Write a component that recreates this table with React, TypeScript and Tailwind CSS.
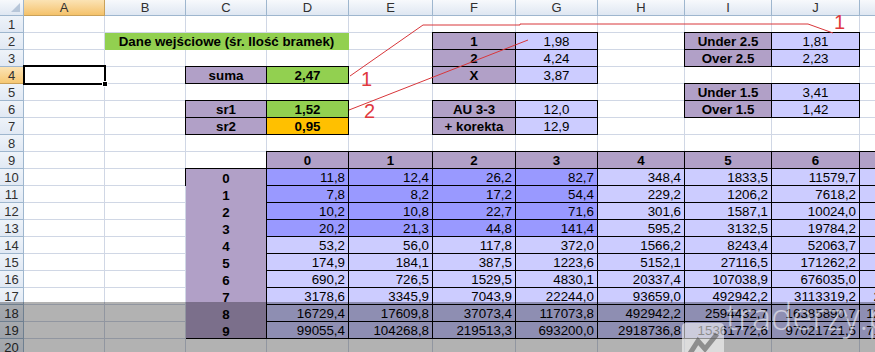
import React from "react";

const FONT: React.CSSProperties = { fontFamily: '"Liberation Sans", Arial, sans-serif' };

const GRIDL = "border-r border-b border-[#d0d7e5]";
const BOX = "border-r border-b border-black shadow-[0_-1px_0_0_#000,-1px_0_0_0_#000,-1px_-1px_0_0_#000]";
const PURPLE = "bg-[#b1a0c7]";
const LAV = "bg-[#ccccff]";
const BLUE = "bg-[#9999ff]";
const GREEN = "bg-[#92d050]";
const ORANGE = "bg-[#ffc000]";

type Align = "l" | "c" | "r";

function Cell({ t, cls = "", a = "c", bold = false }: { t?: string; cls?: string; a?: Align; bold?: boolean }) {
  const al = a === "r" ? "justify-end pr-[3px]" : a === "c" ? "justify-center" : "justify-start pl-[3px]";
  return (
    <div
      className={`flex items-end overflow-hidden whitespace-nowrap text-[13.33px] leading-[15px] text-black ${al} ${bold ? "font-bold" : ""} ${cls}`}
    >
      {t}
    </div>
  );
}

const E = () => <div className={GRIDL} />;

function RH({ n, sel = false }: { n: number; sel?: boolean }) {
  return (
    <div
      className={`flex items-center justify-center border-r border-b text-[13px] leading-none text-[#303030] ${
        sel
          ? "border-[#c9a15a] bg-linear-to-b from-[#fbe3b4] to-[#f6c873]"
          : "border-[#9eb6ce] bg-linear-to-b from-[#eef3f9] to-[#e1e9f4]"
      }`}
    >
      {n}
    </div>
  );
}

function CH({ l, sel = false }: { l: string; sel?: boolean }) {
  return (
    <div
      className={`flex items-center justify-center border-r border-b text-[13px] leading-none text-[#303030] ${
        sel
          ? "border-[#c9a15a] bg-linear-to-b from-[#fbe3b4] to-[#f4c26a]"
          : "border-[#9eb6ce] bg-linear-to-b from-[#f7f9fc] to-[#dfe7f2]"
      }`}
    >
      {l}
    </div>
  );
}

const DATA: string[][] = [
  ["11,8", "12,4", "26,2", "82,7", "348,4", "1833,5", "11579,7", "85319,2"],
  ["7,8", "8,2", "17,2", "54,4", "229,2", "1206,2", "7618,2", "56131,9"],
  ["10,2", "10,8", "22,7", "71,6", "301,6", "1587,1", "10024,0", "73856,8"],
  ["20,2", "21,3", "44,8", "141,4", "595,2", "3132,5", "19784,2", "145770,0"],
  ["53,2", "56,0", "117,8", "372,0", "1566,2", "8243,4", "52063,7", "383605,4"],
  ["174,9", "184,1", "387,5", "1223,6", "5152,1", "27116,5", "171262,2", "1261859,9"],
  ["690,2", "726,5", "1529,5", "4830,1", "20337,4", "107038,9", "676035,0", "4981025,9"],
  ["3178,6", "3345,9", "7043,9", "22244,0", "93659,0", "492942,2", "3113319,2", "22938935,9"],
  ["16729,4", "17609,8", "37073,4", "117073,8", "492942,2", "2594432,7", "16385890,7", "120731242,7"],
  ["99055,4", "104268,8", "219513,3", "693200,0", "2918736,8", "15361772,6", "97021721,5", "714856043,9"],
];

export default function App() {
  const rows: React.ReactNode[] = [];

  rows.push(
    <div key="corner" className="relative border-r border-b border-[#9eb6ce] bg-linear-to-b from-[#f7f9fc] to-[#dfe7f2]">
      <div className="absolute right-[3px] bottom-[3px] h-0 w-0 border-l-[9px] border-l-transparent [border-bottom:9px_solid_#b7c6d9]" />
    </div>
  );
  ["A", "B", "C", "D", "E", "F", "G", "H", "I", "J", "K"].forEach((l, i) =>
    rows.push(<CH key={"h" + l} l={l} sel={i === 0} />)
  );

  const emptyN = (k: string, n: number) => {
    for (let i = 0; i < n; i++) rows.push(<E key={k + "_" + i} />);
  };

  rows.push(<RH key="r1" n={1} />);
  emptyN("r1", 11);

  rows.push(<RH key="r2" n={2} />);
  rows.push(<E key="r2a" />);
  rows.push(
    <Cell key="r2b" t="Dane wejściowe (śr. Ilość bramek)" bold cls={`col-span-3 border-r border-b border-transparent ${GREEN}`} />
  );
  rows.push(<E key="r2e" />);
  rows.push(<Cell key="r2f" t="1" bold cls={`${BOX} ${PURPLE}`} />);
  rows.push(<Cell key="r2g" t="1,98" cls={`${BOX} ${LAV}`} />);
  rows.push(<E key="r2h" />);
  rows.push(<Cell key="r2i" t="Under 2.5" bold cls={`${BOX} ${PURPLE}`} />);
  rows.push(<Cell key="r2j" t="1,81" cls={`${BOX} ${LAV}`} />);
  rows.push(<E key="r2k" />);

  rows.push(<RH key="r3" n={3} />);
  emptyN("r3", 5);
  rows.push(<Cell key="r3f" t="2" bold cls={`${BOX} ${PURPLE}`} />);
  rows.push(<Cell key="r3g" t="4,24" cls={`${BOX} ${LAV}`} />);
  rows.push(<E key="r3h" />);
  rows.push(<Cell key="r3i" t="Over 2.5" bold cls={`${BOX} ${PURPLE}`} />);
  rows.push(<Cell key="r3j" t="2,23" cls={`${BOX} ${LAV}`} />);
  rows.push(<E key="r3k" />);

  rows.push(<RH key="r4" n={4} sel />);
  rows.push(
    <div key="r4a" className={`relative z-10 ${GRIDL}`}>
      <div className="absolute -left-px -top-[2px] -right-[2px] -bottom-[2px] border-[2px] border-black" />
      <div className="absolute -right-[4px] -bottom-[4px] h-[6px] w-[6px] border border-white bg-black" />
    </div>
  );
  rows.push(<E key="r4b" />);
  rows.push(<Cell key="r4c" t="suma" bold cls={`${BOX} ${PURPLE}`} />);
  rows.push(<Cell key="r4d" t="2,47" bold cls={`${BOX} ${GREEN}`} />);
  rows.push(<E key="r4e" />);
  rows.push(<Cell key="r4f" t="X" bold cls={`${BOX} ${PURPLE}`} />);
  rows.push(<Cell key="r4g" t="3,87" cls={`${BOX} ${LAV}`} />);
  emptyN("r4x", 4);

  rows.push(<RH key="r5" n={5} />);
  emptyN("r5", 8);
  rows.push(<Cell key="r5i" t="Under 1.5" bold cls={`${BOX} ${PURPLE}`} />);
  rows.push(<Cell key="r5j" t="3,41" cls={`${BOX} ${LAV}`} />);
  rows.push(<E key="r5k" />);

  rows.push(<RH key="r6" n={6} />);
  emptyN("r6", 2);
  rows.push(<Cell key="r6c" t="sr1" bold cls={`${BOX} ${PURPLE}`} />);
  rows.push(<Cell key="r6d" t="1,52" bold cls={`${BOX} ${GREEN}`} />);
  rows.push(<E key="r6e" />);
  rows.push(<Cell key="r6f" t="AU 3-3" bold cls={`${BOX} ${PURPLE}`} />);
  rows.push(<Cell key="r6g" t="12,0" cls={`${BOX} ${LAV}`} />);
  rows.push(<E key="r6h" />);
  rows.push(<Cell key="r6i" t="Over 1.5" bold cls={`${BOX} ${PURPLE}`} />);
  rows.push(<Cell key="r6j" t="1,42" cls={`${BOX} ${LAV}`} />);
  rows.push(<E key="r6k" />);

  rows.push(<RH key="r7" n={7} />);
  emptyN("r7", 2);
  rows.push(<Cell key="r7c" t="sr2" bold cls={`${BOX} ${PURPLE}`} />);
  rows.push(<Cell key="r7d" t="0,95" bold cls={`${BOX} ${ORANGE}`} />);
  rows.push(<E key="r7e" />);
  rows.push(<Cell key="r7f" t="+ korekta" bold cls={`${BOX} ${PURPLE}`} />);
  rows.push(<Cell key="r7g" t="12,9" cls={`${BOX} ${LAV}`} />);
  emptyN("r7x", 4);

  rows.push(<RH key="r8" n={8} />);
  emptyN("r8", 11);

  rows.push(<RH key="r9" n={9} />);
  emptyN("r9", 3);
  ["0", "1", "2", "3", "4", "5", "6", "7"].forEach((h, i) =>
    rows.push(
      <Cell
        key={"r9" + h}
        t={h}
        bold
        cls={`border-r border-b border-r-transparent border-b-black ${PURPLE} ${
          i === 0
            ? "shadow-[0_-1px_0_0_#000,-1px_0_0_0_#000,-1px_-1px_0_0_#000]"
            : "shadow-[0_-1px_0_0_#000,-1px_-1px_0_0_#000]"
        }`}
      />
    )
  );

  DATA.forEach((r, ri) => {
    rows.push(<RH key={"rr" + ri} n={10 + ri} />);
    rows.push(<E key={"rr" + ri + "a"} />);
    rows.push(<E key={"rr" + ri + "b"} />);
    if (ri === 0) {
      rows.push(
        <div key="merged" className={`row-span-10 flex flex-col ${BOX} ${PURPLE}`}>
          {["0", "1", "2", "3", "4", "5", "6", "7", "8", "9"].map((n) => (
            <div
              key={n}
              className="flex h-[17px] shrink-0 items-end justify-center text-[13.33px] leading-[15px] font-bold text-black"
            >
              {n}
            </div>
          ))}
        </div>
      );
    }
    r.forEach((v, ci) =>
      rows.push(<Cell key={"d" + ri + "_" + ci} t={v} a="r" cls={`${BOX} ${ri < 4 && ci < 4 ? BLUE : LAV}`} />)
    );
  });

  rows.push(<RH key="r20" n={20} />);
  emptyN("r20", 11);

  return (
    <div className="relative h-[352px] w-[875px] overflow-hidden bg-white" style={FONT}>
      <div className="grid w-[948px] grid-cols-[24px_81px_81px_81px_82px_84px_83px_82px_87px_87px_88px_88px] grid-rows-[16px_repeat(20,17px)]">
        {rows}
      </div>

      <svg className="pointer-events-none absolute left-0 top-0 z-20" width="875" height="352">
        <polyline
          points="350,76 423,25 520,25 520,24 808,24 833,33"
          fill="none"
          stroke="#d8363a"
          strokeWidth="1"
        />
        <line x1="349" y1="110" x2="528" y2="40" stroke="#d8363a" strokeWidth="1" />
        <text x="361" y="86" fill="#e0393e" fontSize="20" fontFamily="Liberation Sans, Arial, sans-serif">1</text>
        <text x="364" y="118" fill="#e0393e" fontSize="20" fontFamily="Liberation Sans, Arial, sans-serif">2</text>
        <text x="834" y="29" fill="#e0393e" fontSize="20" fontFamily="Liberation Sans, Arial, sans-serif">1</text>
      </svg>

      <div className="absolute inset-x-0 top-[302px] z-30 h-[50px] bg-black/30">
        <div className="absolute left-[682px] top-[21px] flex h-[42px] w-[42px] items-center justify-center rounded-[4px] bg-white/55">
          <svg width="34" height="30" viewBox="0 0 34 30">
            <polyline points="3,26 12,12 19,20 31,5" fill="none" stroke="rgba(90,90,90,0.6)" strokeWidth="5" />
          </svg>
        </div>
        <div
          className="absolute left-[726px] -top-[3px] text-[36px] leading-none font-light text-white/55"
          style={{ fontFamily: '"Open Sans", "Liberation Sans", sans-serif' }}
        >
          traderzy.pl
        </div>
      </div>
    </div>
  );
}
